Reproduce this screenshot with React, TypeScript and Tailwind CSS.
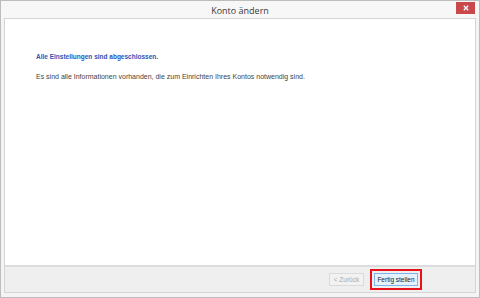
export default function App() {
  return (
    <div className="w-[480px] h-[298px] bg-[#f4f4f4] border border-[#bdbdbd] flex flex-col overflow-hidden" style={{ fontFamily: '"Liberation Sans", Arial, sans-serif' }}>
      <div className="relative h-[17px] shrink-0 bg-[#f7f7f7] flex items-center justify-center">
        <span className="text-[9px] text-[#3a3a3a] leading-none mt-[1px]" style={{ fontFamily: '"Open Sans", sans-serif' }}>Konto ändern</span>
        <div className="absolute right-[4px] top-[1px] w-[19px] h-[12px] bg-[#c9484b] flex items-center justify-center">
          <svg width="6" height="6" viewBox="0 0 6 6">
            <path d="M0.8 0.8 L5.2 5.2 M5.2 0.8 L0.8 5.2" stroke="#fff" strokeWidth="1.3" />
          </svg>
        </div>
      </div>
      <div className="flex-1 flex flex-col mx-[3px] mb-[4px] border border-[#d4d4d4] bg-white">
        <div className="flex-1 flex flex-col px-[31px] pt-[33px] gap-[10px]">
          <div className="text-[6.5px] font-bold text-[#2a55b8] leading-[10px]">Alle Einstellungen sind abgeschlossen.</div>
          <div className="text-[7px] text-[#444] leading-[10px]">Es sind alle Informationen vorhanden, die zum Einrichten Ihres Kontos notwendig sind.</div>
        </div>
        <div className="h-[27px] shrink-0 bg-[#efefef] border-t-2 border-[#dcdcdc] flex items-center justify-end pr-[57px] gap-[10px]">
          <div className="w-[35px] h-[13px] border border-[#dadada] bg-[#f2f2f2] flex items-center justify-center text-[6.5px] text-[#a8a8a8]">&lt; Zurück</div>
          <div className="relative">
            <div className="absolute -inset-[4px] border-2 border-[#e8121c]" />
            <div className="w-[44px] h-[13px] border border-[#7eb4ea] bg-[#e5f1fb] flex items-center justify-center text-[6.5px] text-[#222]">Fertig stellen</div>
          </div>
        </div>
      </div>
    </div>
  );
}
